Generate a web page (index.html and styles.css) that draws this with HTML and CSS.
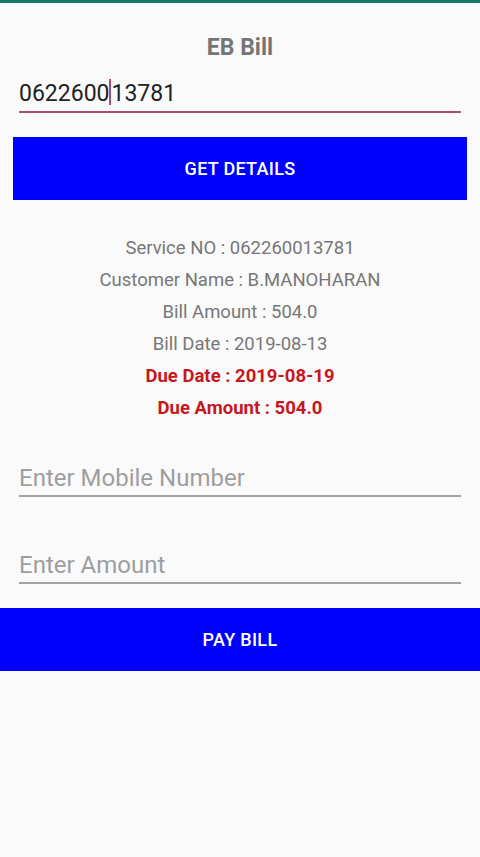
FILE: index.html
```html
<!DOCTYPE html>
<html lang="en">
<head>
    <meta charset="UTF-8">
    <meta name="viewport" content="width=device-width, initial-scale=1.0">
    <title>EB Bill</title>
    <link rel="stylesheet" href="styles.css">
</head>
<body>
    <div class="status-bar"></div>

    <h1 class="title">EB Bill</h1>

    <div class="field field-active">0622600<span class="caret"></span>13781</div>

    <div class="btn btn-details">GET DETAILS</div>

    <div class="bill-info">
        <p>Service NO : 062260013781</p>
        <p>Customer Name : B.MANOHARAN</p>
        <p>Bill Amount : 504.0</p>
        <p>Bill Date : 2019-08-13</p>
        <p class="due">Due Date : 2019-08-19</p>
        <p class="due">Due Amount : 504.0</p>
    </div>

    <div class="field field-hint field-mobile">Enter Mobile Number</div>
    <div class="field field-hint field-amount">Enter Amount</div>

    <div class="btn btn-pay">PAY BILL</div>
</body>
</html>
```

FILE: styles.css
```css
:root {
    --bg: #fafafa;
    --teal: #167a69;
    --blue: #0000ff;
    --accent: #b04a77;
    --grey-text: #757575;
    --hint: #9e9e9e;
    --due-red: #c8161d;
}

* {
    margin: 0;
    padding: 0;
    box-sizing: border-box;
}

body {
    font-family: Roboto, "Noto Sans", sans-serif;
    background: var(--bg);
    min-height: 100vh;
}

.status-bar {
    height: 3px;
    background: var(--teal);
}

.title {
    margin-top: 30px;
    text-align: center;
    font-size: 23px;
    line-height: 30px;
    font-weight: 700;
    color: var(--grey-text);
}

.field {
    margin: 0 19px;
    font-size: 23px;
    line-height: 30px;
    padding-bottom: 2px;
}

.field-active {
    margin-top: 16px;
    color: #222;
    border-bottom: 2px solid var(--accent);
}

.caret {
    display: inline-block;
    width: 2px;
    height: 26px;
    background: var(--accent);
    vertical-align: -4px;
}

.field-hint {
    color: var(--hint);
    border-bottom: 2px solid #a3a3a3;
    font-size: 24px;
}

.field-mobile {
    margin-top: 39px;
}

.field-amount {
    margin-top: 53px;
}

.btn {
    height: 63px;
    background: var(--blue);
    color: #fff;
    font-size: 18px;
    font-weight: 500;
    letter-spacing: 0.3px;
    display: flex;
    align-items: center;
    justify-content: center;
}

.btn-details {
    margin: 24px 13px 0;
}

.btn-pay {
    margin-top: 24px;
}

.bill-info {
    margin-top: 32px;
    text-align: center;
}

.bill-info p {
    font-size: 18.5px;
    line-height: 32px;
    color: #777;
}

.bill-info .due {
    color: var(--due-red);
    font-weight: 700;
}
```
